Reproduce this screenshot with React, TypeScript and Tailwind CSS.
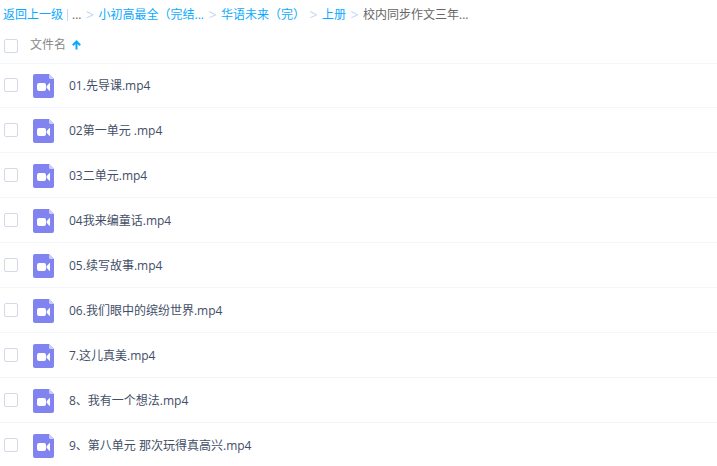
import { Fragment } from "react";

const crumbs = ["...", "小初高最全（完结...", "华语未来（完）", "上册"];

const files = [
  "01.先导课.mp4",
  "02第一单元 .mp4",
  "03二单元.mp4",
  "04我来编童话.mp4",
  "05.续写故事.mp4",
  "06.我们眼中的缤纷世界.mp4",
  "7.这儿真美.mp4",
  "8、我有一个想法.mp4",
  "9、第八单元 那次玩得真高兴.mp4",
];

const checkboxClass =
  "size-3.5 shrink-0 appearance-none rounded-xs border border-[#d3d9e6] bg-white checked:border-[#09aaff] checked:bg-[#09aaff]";

function VideoFileIcon() {
  return (
    <svg width="21" height="24" viewBox="0 0 21 24" aria-hidden="true" className="shrink-0">
      <path d="M2 0H16l5 5v17a2 2 0 0 1-2 2H2a2 2 0 0 1-2-2V2a2 2 0 0 1 2-2Z" fill="#8183f1" />
      <path d="M16 0l5 5h-3.500A1.500 1.500 0 0 1 16 3.500Z" fill="#cdcdfa" />
      <rect x="4" y="9" width="9" height="8" rx="2" fill="#fff" />
      <path d="M17 9.500v7c0 .4-.4.500-.7.300L14 14.300c-.6-.7-.6-1.900 0-2.600l2.300-2.500c.3-.2.7-.1.7.300Z" fill="#fff" />
    </svg>
  );
}

function SortArrow() {
  return (
    <svg width="9" height="10" viewBox="0 0 9 10" fill="none" stroke="#09aaff" strokeWidth="2" aria-hidden="true">
      <path d="M4.500 9.500V1.500M.8 5.200l3.700-3.700 3.700 3.700" />
    </svg>
  );
}

export default function App() {
  return (
    <main className="bg-white font-['Open_Sans','Noto_Sans_CJK_SC',sans-serif] text-xs text-[#424e67]">
      <nav aria-label="路径" className="flex h-7 items-center gap-1 overflow-hidden whitespace-nowrap px-[3px] pt-0.5 text-[#09aaff]">
        <a href="#back">返回上一级</a>
        <span className="h-3 w-px bg-[#c4d8f4]" />
        {crumbs.map((crumb, i) => (
          <Fragment key={crumb}>
            {i === 0 ? <span className="text-[#666]">{crumb}</span> : <a href={`#level-${i}`}>{crumb}</a>}
            <span className="flex w-[9px] justify-center text-sm text-[#c4d8f4]">&gt;</span>
          </Fragment>
        ))}
        <span className="text-[#666]">校内同步作文三年...</span>
      </nav>

      <header className="-mb-px flex h-9 items-center gap-3 border-b border-[#f2f6fd] px-1">
        <input type="checkbox" aria-label="全选" className={checkboxClass} />
        <button type="button" className="flex items-center gap-1.5 pb-0.5 text-[#888]">
          文件名
          <SortArrow />
        </button>
      </header>

      <ul>
        {files.map((name, i) => (
          <li key={name} className="flex h-[45px] items-center border-b border-[#f2f6fd] px-1">
            <input id={`file-${i}`} type="checkbox" className={checkboxClass} />
            <label htmlFor={`file-${i}`} className="flex items-center gap-[15px] pt-0.5 pl-[15px]">
              <VideoFileIcon />
              {name}
            </label>
          </li>
        ))}
      </ul>
    </main>
  );
}
